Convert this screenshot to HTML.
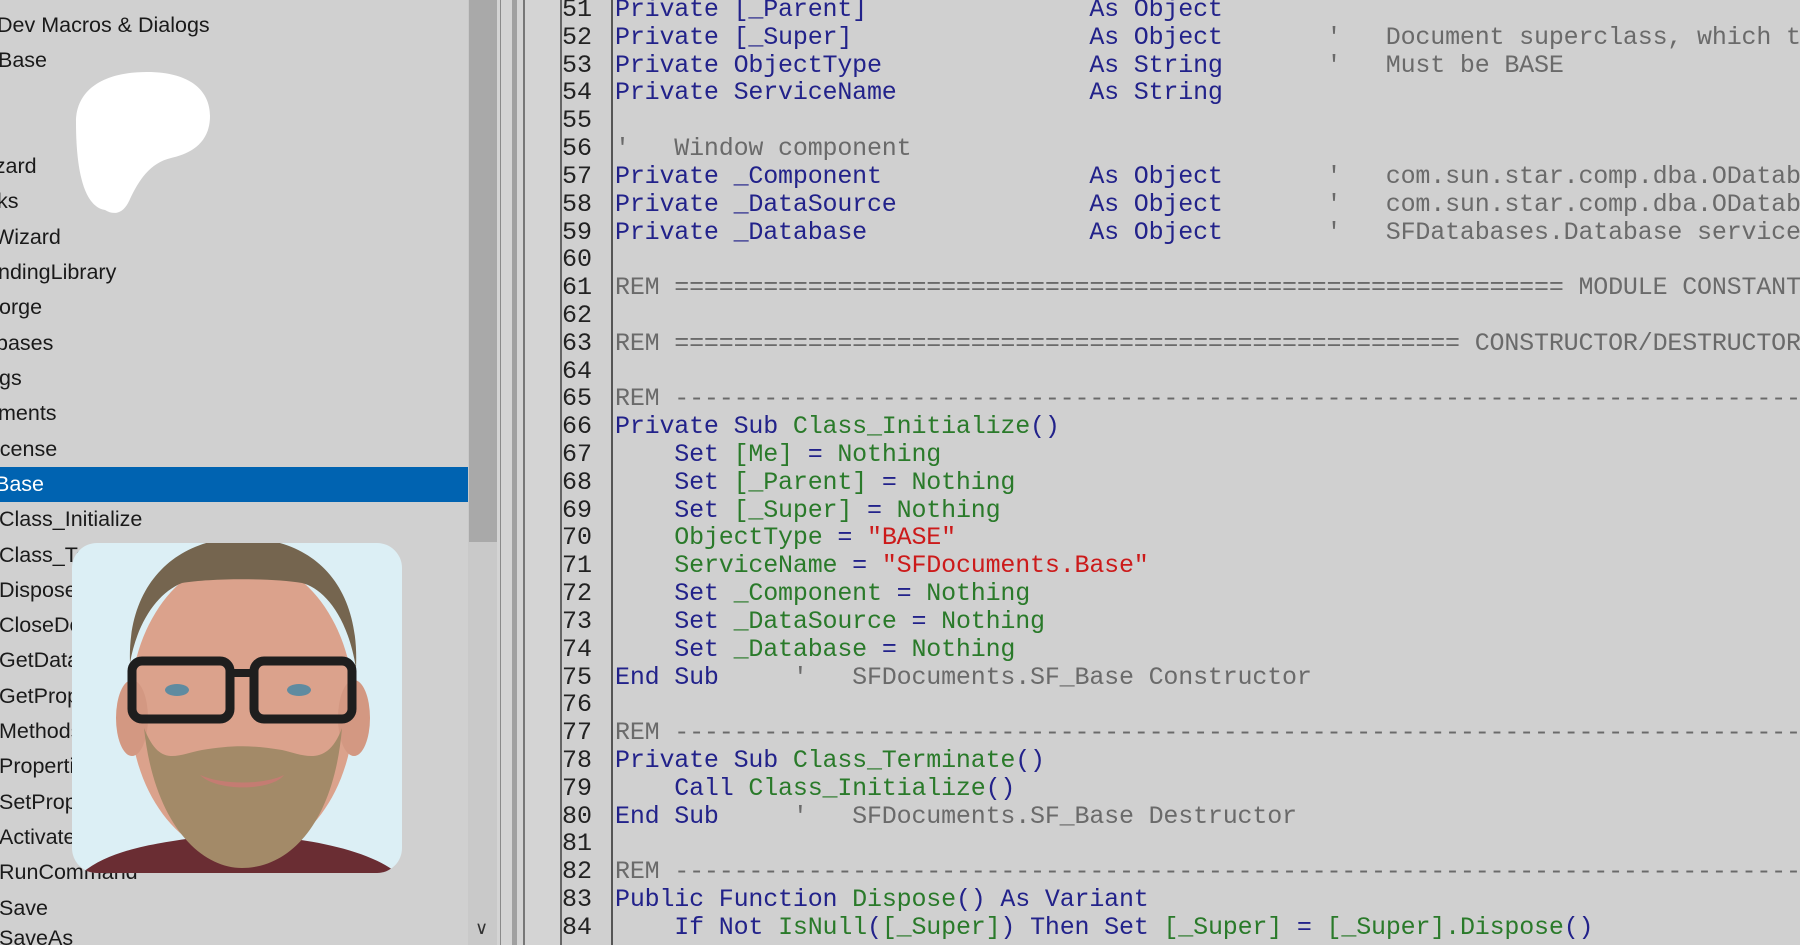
<!DOCTYPE html>
<html><head><meta charset="utf-8"><style>
body{margin:0;width:1800px;height:945px;overflow:hidden;background:#d0d0d0;position:relative;font-family:"Liberation Sans",sans-serif}
.l{position:absolute;left:0;font-size:21.5px;color:#1a1a1a;white-space:nowrap;line-height:35px;height:35px}
.wrap{position:absolute;left:0;top:0;width:1800px;height:945px;overflow:hidden}
.code{position:absolute;left:615px;top:-4px;font-family:"Liberation Mono",monospace;font-size:25px;letter-spacing:-0.18px;line-height:27.82px;white-space:pre;color:#22228a;margin:0}
.num{position:absolute;left:562px;top:-4px;font-family:"Liberation Mono",monospace;font-size:25px;line-height:27.82px;white-space:pre;color:#222;margin:0}
.g{color:#2a7a2a}.r{color:#cc1a1a}.c{color:#6a6a6a}
.v{position:absolute;top:0;height:945px}
</style></head><body><div class="wrap">
<div class="l" style="top:8px;left:-3px">Dev Macros &amp; Dialogs</div>
<div class="l" style="top:43px;left:-2px">Base</div>
<div class="l" style="top:149px;left:-10px">izard</div>
<div class="l" style="top:184px;left:-3px">ks</div>
<div class="l" style="top:220px;left:-6px">Wizard</div>
<div class="l" style="top:255px;left:-2px">ndingLibrary</div>
<div class="l" style="top:290px;left:-1px">orge</div>
<div class="l" style="top:326px;left:-4px">bases</div>
<div class="l" style="top:361px;left:-1px">gs</div>
<div class="l" style="top:396px;left:-2px">ments</div>
<div class="l" style="top:432px;left:-5px">icense</div>
<div style="position:absolute;left:0;top:467px;width:468px;height:35px;background:#0063b1"></div>
<div class="l" style="top:467px;left:-5px;color:#fff">Base</div>
<div class="l" style="top:502px;left:-1px">Class_Initialize</div>
<div class="l" style="top:538px;left:-1px">Class_Terminate</div>
<div class="l" style="top:573px;left:-1px">Dispose</div>
<div class="l" style="top:608px;left:-1px">CloseDocument</div>
<div class="l" style="top:643px;left:-1px">GetDatabase</div>
<div class="l" style="top:679px;left:-1px">GetProperty</div>
<div class="l" style="top:714px;left:-1px">Methods</div>
<div class="l" style="top:749px;left:-1px">Properties</div>
<div class="l" style="top:785px;left:-1px">SetProperty</div>
<div class="l" style="top:820px;left:-1px">Activate</div>
<div class="l" style="top:855px;left:-1px">RunCommand</div>
<div class="l" style="top:891px;left:-1px">Save</div>
<div class="l" style="top:921px;left:-1px">SaveAs</div>

<svg style="position:absolute;left:0;top:0" width="300" height="260"><path fill="#fff" d="M105 210 C81 206 76 160 76 122 C76 90 103 72 147 72 C192 72 210 92 210 116 C210 144 189 154 171 158 C150 163 139 180 130 199 C124 213 115 216 105 210 Z"/></svg>

<div class="v" style="left:468px;width:29px;background:#c9c9c9"></div>
<div class="v" style="left:469px;width:28px;height:542px;background:#a9a9a9"></div>
<div style="position:absolute;left:475px;top:918px;font-size:18px;color:#333">&#8744;</div>
<div class="v" style="left:497px;width:64px;background:#d4d4d4"></div>
<div class="v" style="left:500px;width:1px;background:#8a8a8a"></div>
<div class="v" style="left:512px;width:5px;background:#a0a0a0"></div>
<div class="v" style="left:523px;width:2px;background:#777"></div>
<div class="v" style="left:560px;width:2px;background:#666"></div>
<div class="v" style="left:611px;width:2px;background:#555"></div>

<svg style="position:absolute;left:72px;top:543px" width="330" height="330">
<defs><clipPath id="cp"><rect width="330" height="330" rx="25"/></clipPath></defs>
<g clip-path="url(#cp)">
<rect width="330" height="330" fill="#dceff5"/>
<path d="M10 330 C40 305 90 300 120 295 L215 295 C255 300 300 310 325 330 Z" fill="#6a2d33"/>
<ellipse cx="170" cy="165" rx="112" ry="150" fill="#dba28c"/>
<ellipse cx="60" cy="175" rx="16" ry="38" fill="#d39882"/>
<ellipse cx="282" cy="175" rx="16" ry="38" fill="#d39882"/>
<path d="M58 120 C55 40 105 -5 170 -5 C240 -5 288 40 284 125 C275 70 250 45 230 40 C200 35 140 35 110 40 C85 50 65 80 58 120 Z" fill="#75654f"/>
<path d="M72 185 C82 280 128 325 170 325 C218 325 262 280 270 185 C255 225 232 212 210 207 C180 202 160 202 130 207 C104 212 88 225 72 185 Z" fill="#a38a68"/>
<path d="M128 232 C150 242 192 242 212 232 C200 248 145 249 128 232 Z" fill="#c47c72"/>
<rect x="60" y="118" width="98" height="58" rx="10" fill="none" stroke="#1e1e1e" stroke-width="9"/>
<rect x="182" y="118" width="98" height="58" rx="10" fill="none" stroke="#1e1e1e" stroke-width="9"/>
<path d="M155 130 L185 130" stroke="#1e1e1e" stroke-width="8"/>
<ellipse cx="105" cy="147" rx="12" ry="6" fill="#5f8ba0"/>
<ellipse cx="227" cy="147" rx="12" ry="6" fill="#5f8ba0"/>
</g></svg>

<pre class="num">51
52
53
54
55
56
57
58
59
60
61
62
63
64
65
66
67
68
69
70
71
72
73
74
75
76
77
78
79
80
81
82
83
84</pre>
<pre class="code">Private [_Parent]               As Object
Private [_Super]                As Object       <span class="c">'   Document superclass, which the object is based on</span>
Private ObjectType              As String       <span class="c">'   Must be BASE</span>
Private ServiceName             As String

<span class="c">'   Window component</span>
Private _Component              As Object       <span class="c">'   com.sun.star.comp.dba.ODatabaseDocument</span>
Private _DataSource             As Object       <span class="c">'   com.sun.star.comp.dba.ODatabaseSource</span>
Private _Database               As Object       <span class="c">'   SFDatabases.Database service instance</span>

<span class="c">REM ============================================================ MODULE CONSTANTS ======</span>

<span class="c">REM ===================================================== CONSTRUCTOR/DESTRUCTORS ======</span>

<span class="c">REM ----------------------------------------------------------------------------------</span>
Private Sub <span class="g">Class_Initialize</span>()
    Set <span class="g">[Me]</span> = <span class="g">Nothing</span>
    Set <span class="g">[_Parent]</span> = <span class="g">Nothing</span>
    Set <span class="g">[_Super]</span> = <span class="g">Nothing</span>
    <span class="g">ObjectType</span> = <span class="r">"BASE"</span>
    <span class="g">ServiceName</span> = <span class="r">"SFDocuments.Base"</span>
    Set <span class="g">_Component</span> = <span class="g">Nothing</span>
    Set <span class="g">_DataSource</span> = <span class="g">Nothing</span>
    Set <span class="g">_Database</span> = <span class="g">Nothing</span>
End Sub     <span class="c">'   SFDocuments.SF_Base Constructor</span>

<span class="c">REM ----------------------------------------------------------------------------------</span>
Private Sub <span class="g">Class_Terminate</span>()
    Call <span class="g">Class_Initialize</span>()
End Sub     <span class="c">'   SFDocuments.SF_Base Destructor</span>

<span class="c">REM ----------------------------------------------------------------------------------</span>
Public Function <span class="g">Dispose</span>() As Variant
    If Not <span class="g">IsNull</span>(<span class="g">[_Super]</span>) Then Set <span class="g">[_Super]</span> = <span class="g">[_Super].Dispose</span>()</pre>
</div></body></html>
